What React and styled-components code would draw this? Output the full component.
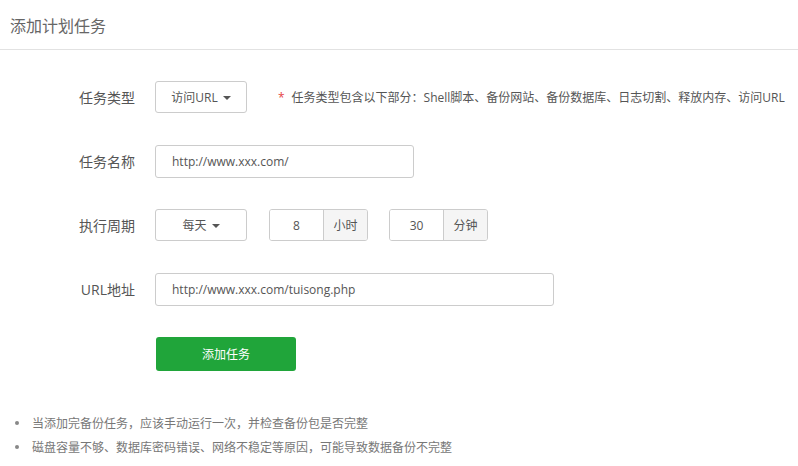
import React from "react";
import styled, { createGlobalStyle } from "styled-components";

const GlobalStyle = createGlobalStyle`
    html, body {
        margin: 0;
        padding: 0;
        background: #fff;
    }
    body {
        font-family: "Open Sans", "Noto Sans CJK SC", sans-serif;
        color: #555;
    }
`;

const Page = styled.div`
    width: 798px;
    height: 466px;
    overflow: hidden;
    background: #fff;
`;

const Header = styled.div`
    height: 49px;
    display: flex;
    align-items: center;
    padding-left: 10px;
    border-bottom: 1px solid #e2e2e2;
    font-size: 16px;
    color: #666;
`;

const Form = styled.div`
    display: flex;
    flex-direction: column;
    gap: 32px;
    padding-top: 31px;
`;

const Row = styled.div`
    display: flex;
    align-items: center;
    height: 32px;
`;

const Label = styled.div`
    width: 135px;
    flex-shrink: 0;
    text-align: right;
    font-size: 14px;
    color: #555;
    margin-right: 20px;
`;

const Select = styled.div`
    width: 92px;
    height: 32px;
    box-sizing: border-box;
    display: flex;
    align-items: center;
    justify-content: center;
    gap: 5px;
    border: 1px solid #ccc;
    border-radius: 3px;
    font-size: 12px;
    color: #555;
    margin-right: ${(p) => p.$gap || 0}px;
`;

const Caret = styled.span`
    width: 0;
    height: 0;
    border-left: 4px solid transparent;
    border-right: 4px solid transparent;
    border-top: 4px solid #555;
    margin-top: 1px;
`;

const Hint = styled.div`
    display: flex;
    align-items: center;
    font-size: 12px;
    color: #555;
    white-space: nowrap;
`;

const Star = styled.span`
    color: #e54545;
    margin-right: 7px;
`;

const TextInput = styled.div`
    width: ${(p) => p.$width}px;
    height: 33px;
    box-sizing: border-box;
    display: flex;
    align-items: center;
    padding-left: 16px;
    border: 1px solid #ccc;
    border-radius: 3px;
    font-size: 12px;
    color: #555;
`;

const Group = styled.div`
    display: flex;
    height: 32px;
    box-sizing: border-box;
    border: 1px solid #ccc;
    border-radius: 3px;
    overflow: hidden;
    margin-left: ${(p) => p.$gap}px;
`;

const GroupValue = styled.div`
    width: 53px;
    display: flex;
    align-items: center;
    justify-content: center;
    font-size: 12px;
    color: #555;
    background: #fff;
`;

const Addon = styled.div`
    width: 43px;
    display: flex;
    align-items: center;
    justify-content: center;
    border-left: 1px solid #ccc;
    background: #f5f5f5;
    font-size: 12px;
    color: #555;
`;

const SubmitRow = styled.div`
    padding-left: 156px;
`;

const SubmitButton = styled.button`
    width: 140px;
    height: 34px;
    border: none;
    border-radius: 3px;
    background: #20a53a;
    color: #fff;
    font-size: 12px;
    font-family: inherit;
    cursor: pointer;
`;

const Notes = styled.ul`
    list-style: none;
    margin: 40px 0 0;
    padding: 0;
`;

const Note = styled.li`
    display: flex;
    align-items: center;
    height: 24px;
    font-size: 12px;
    color: #777;

    &::before {
        content: "";
        width: 4px;
        height: 4px;
        border-radius: 50%;
        background: #888;
        margin-left: 15px;
        margin-right: 13px;
    }
`;

const App = () => {
    return (
        <Page>
            <GlobalStyle />
            <Header>添加计划任务</Header>
            <Form>
                <Row>
                    <Label>任务类型</Label>
                    <Select $gap={31}>
                        访问URL <Caret />
                    </Select>
                    <Hint>
                        <Star>*</Star>
                        任务类型包含以下部分：Shell脚本、备份网站、备份数据库、日志切割、释放内存、访问URL
                    </Hint>
                </Row>
                <Row>
                    <Label>任务名称</Label>
                    <TextInput $width={259}>http://www.xxx.com/</TextInput>
                </Row>
                <Row>
                    <Label>执行周期</Label>
                    <Select>
                        每天 <Caret />
                    </Select>
                    <Group $gap={22}>
                        <GroupValue>8</GroupValue>
                        <Addon>小时</Addon>
                    </Group>
                    <Group $gap={21}>
                        <GroupValue>30</GroupValue>
                        <Addon>分钟</Addon>
                    </Group>
                </Row>
                <Row>
                    <Label>URL地址</Label>
                    <TextInput $width={399}>http://www.xxx.com/tuisong.php</TextInput>
                </Row>
                <SubmitRow>
                    <SubmitButton>添加任务</SubmitButton>
                </SubmitRow>
            </Form>
            <Notes>
                <Note>当添加完备份任务，应该手动运行一次，并检查备份包是否完整</Note>
                <Note>磁盘容量不够、数据库密码错误、网络不稳定等原因，可能导致数据备份不完整</Note>
            </Notes>
        </Page>
    );
};

export default App;
